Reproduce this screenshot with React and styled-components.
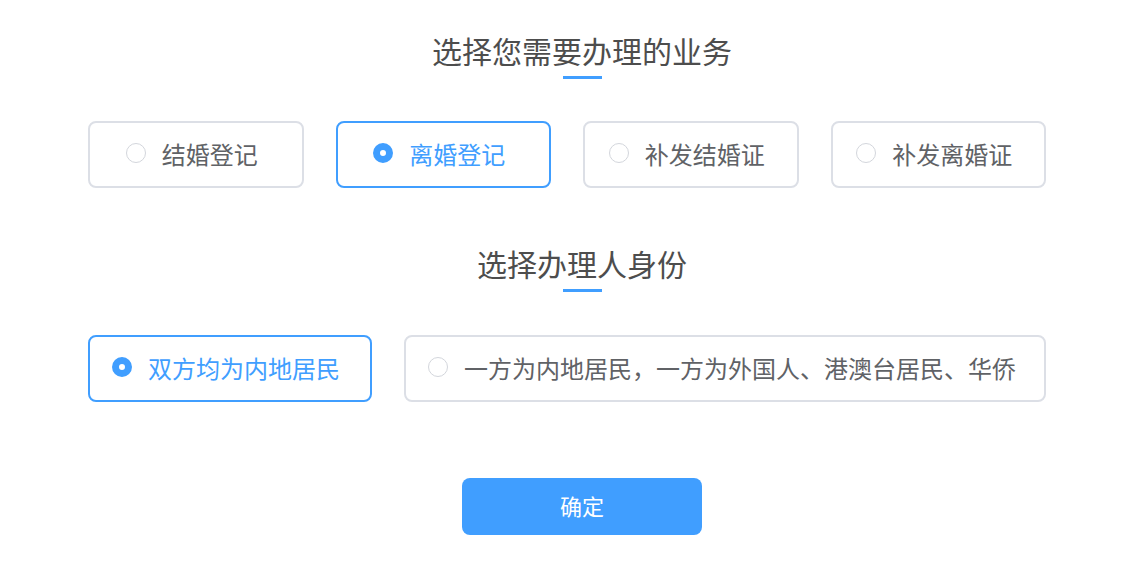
import React, { useState } from "react";
import styled, { createGlobalStyle } from "styled-components";

const Palette = {
  main: "#409eff",
  border: "#dcdfe6",
  radio: "#d3d6dc",
  text: "#606266",
  title: "#4d4d4d",
};

const GlobalStyle = createGlobalStyle`
  html, body {
    margin: 0;
    padding: 0;
    background: #fff;
  }
  body {
    font-family: "Noto Sans CJK SC", "Noto Sans", sans-serif;
  }
`;

const Page = styled.main`
  width: 988px;
  padding: 30px 0 0 88px;
  display: flex;
  flex-direction: column;
  align-items: center;
`;

const SectionTitle = styled.h2`
  margin: ${(p) => p.$top}px 0 0;
  font-size: 30px;
  line-height: 40px;
  font-weight: 400;
  color: ${Palette.title};
  text-align: center;
`;

const Underline = styled.span`
  display: block;
  width: 39px;
  height: 3px;
  margin-top: 6px;
  background: ${Palette.main};
`;

const OptionRow = styled.div`
  align-self: flex-start;
  width: 958px;
  margin-top: ${(p) => p.$top}px;
  display: grid;
  grid-template-columns: ${(p) => p.$columns};
  gap: 32px;
`;

const OptionCard = styled.button`
  height: 67px;
  box-sizing: border-box;
  display: flex;
  align-items: center;
  justify-content: ${(p) => (p.$center ? "center" : "flex-start")};
  gap: 16px;
  padding: ${(p) => (p.$center ? "0 30px 3px 22px" : "0 22px 3px")};
  border: 2px solid ${(p) => (p.$active ? Palette.main : Palette.border)};
  border-radius: 8px;
  background: #fff;
  cursor: pointer;
  font-family: inherit;
  font-size: 24px;
  color: ${(p) => (p.$active ? Palette.main : Palette.text)};
  white-space: nowrap;
`;

const Radio = styled.span`
  flex: none;
  width: 20px;
  height: 20px;
  box-sizing: border-box;
  border-radius: 50%;
  border: ${(p) =>
    p.$active ? `7px solid ${Palette.main}` : `1.5px solid ${Palette.radio}`};
  background: #fff;
`;

const SubmitButton = styled.button`
  margin-top: 76px;
  width: 240px;
  height: 57px;
  border: none;
  border-radius: 8px;
  background: ${Palette.main};
  color: #fff;
  font-family: inherit;
  font-size: 22px;
  padding: 0 0 3px;
  cursor: pointer;
`;

const services = ["结婚登记", "离婚登记", "补发结婚证", "补发离婚证"];
const identities = [
  "双方均为内地居民",
  "一方为内地居民，一方为外国人、港澳台居民、华侨",
];

function Option({ label, active, center, onClick }) {
  return (
    <OptionCard $active={active} $center={center} onClick={onClick}>
      <Radio $active={active} />
      <span>{label}</span>
    </OptionCard>
  );
}

export default function App() {
  const [service, setService] = useState(1);
  const [identity, setIdentity] = useState(0);

  return (
    <Page>
      <GlobalStyle />
      <SectionTitle $top={0}>选择您需要办理的业务</SectionTitle>
      <Underline />
      <OptionRow $top={42} $columns="repeat(4, 1fr)">
        {services.map((s, i) => (
          <Option
            key={s}
            label={s}
            center
            active={service === i}
            onClick={() => setService(i)}
          />
        ))}
      </OptionRow>

      <SectionTitle $top={55}>选择办理人身份</SectionTitle>
      <Underline />
      <OptionRow $top={43} $columns="284px 1fr">
        {identities.map((s, i) => (
          <Option
            key={s}
            label={s}
            active={identity === i}
            onClick={() => setIdentity(i)}
          />
        ))}
      </OptionRow>

      <SubmitButton>确定</SubmitButton>
    </Page>
  );
}
